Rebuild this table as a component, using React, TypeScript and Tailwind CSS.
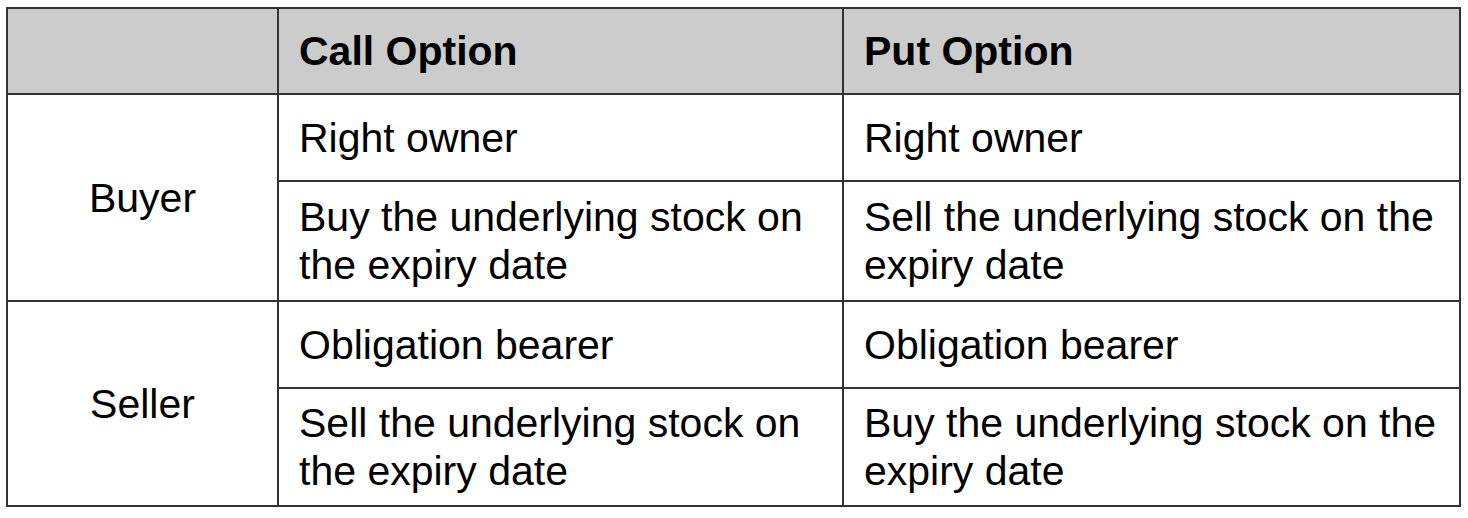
import React from "react";

const border = "border-2 border-[#333333] align-middle";
const cell = `${border} pl-[20px] pr-[12px] text-left`;
const label = `${border} px-[12px] text-center`;

const App = () => {
  return (
    <div className="min-h-screen bg-white pl-[6px] pt-[7px]" style={{ fontFamily: '"Liberation Sans", Arial, sans-serif' }}>
      <table className="border-collapse text-[41px] leading-[48px] text-black">
        <colgroup>
          <col className="w-[271px]" />
          <col className="w-[565px]" />
          <col className="w-[617px]" />
        </colgroup>
        <thead>
          <tr className="h-[86px] bg-[#cccccc]">
            <th className={label}></th>
            <th className={`${cell} font-bold`}>Call Option</th>
            <th className={`${cell} font-bold`}>Put Option</th>
          </tr>
        </thead>
        <tbody>
          <tr className="h-[87px]">
            <td rowSpan={2} className={label}>Buyer</td>
            <td className={cell}>Right owner</td>
            <td className={cell}>Right owner</td>
          </tr>
          <tr className="h-[120px]">
            <td className={cell}>Buy the underlying stock on the expiry date</td>
            <td className={cell}>Sell the underlying stock on the expiry date</td>
          </tr>
          <tr className="h-[87px]">
            <td rowSpan={2} className={label}>Seller</td>
            <td className={cell}>Obligation bearer</td>
            <td className={cell}>Obligation bearer</td>
          </tr>
          <tr className="h-[118px]">
            <td className={cell}>Sell the underlying stock on the expiry date</td>
            <td className={cell}>Buy the underlying stock on the expiry date</td>
          </tr>
        </tbody>
      </table>
    </div>
  );
};

export default App;
